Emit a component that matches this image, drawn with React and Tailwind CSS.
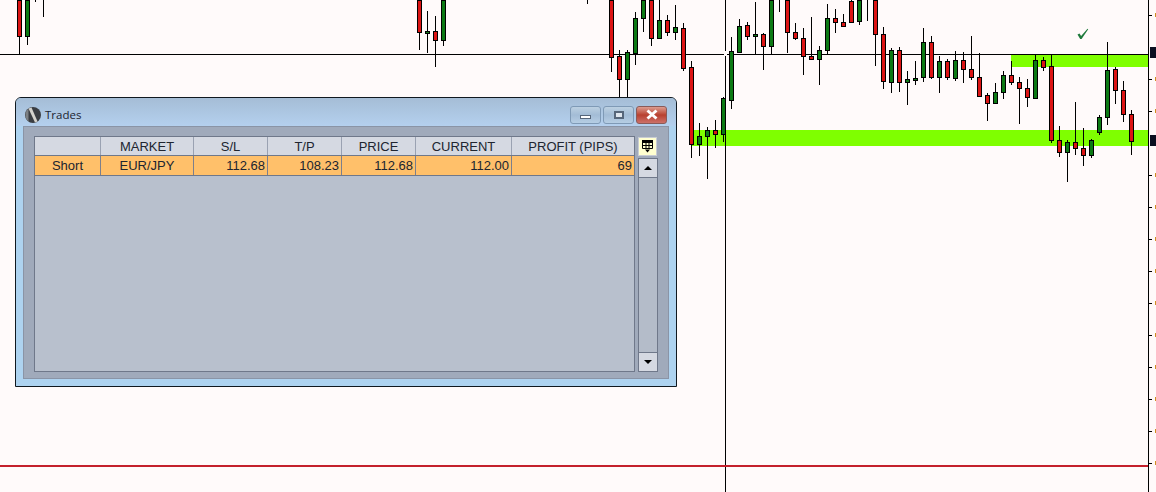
import React from 'react';

// x, wick top, wick bottom, body top, body bottom, colour (r / g)
const candles = [
  [19, 0, 54, 0, 36, 'r'], [27, 0, 45, 0, 36, 'g'], [35, 0, 2], [43, 0, 17],
  [419, 0, 50, 0, 32, 'r'], [427, 11, 53, 31, 33, 'g'], [435, 16, 67, 31, 40, 'r'], [443, 0, 46, 0, 40, 'g'],
  [587, 0, 4],
  [611, 0, 72, 0, 57, 'r'], [619, 50, 97, 56, 79, 'r'], [627, 50, 97, 52, 79, 'g'], [635, 12, 65, 18, 53, 'g'],
  [643, 0, 32, 0, 18, 'g'], [651, 0, 46, 0, 38, 'r'], [659, 0, 38, 20, 38, 'g'], [667, 15, 36, 20, 32, 'r'],
  [675, 5, 40, 27, 32, 'g'], [683, 23, 71, 28, 68, 'r'], [691, 61, 158, 67, 144, 'r'], [699, 123, 156, 136, 144, 'g'],
  [707, 127, 179, 130, 136, 'g'], [715, 120, 148, 130, 134, 'r'], [723, 97, 142, 98, 134, 'g'], [731, 37, 109, 51, 100, 'g'],
  [739, 19, 53, 26, 52, 'g'], [747, 22, 40, 25, 36, 'r'], [755, 2, 54, 34, 36, 'g'], [763, 33, 70, 34, 46, 'r'],
  [771, 0, 54, 0, 46, 'g'], [779, 0, 12], [787, 0, 53, 0, 32, 'r'], [795, 23, 40, 32, 38, 'r'],
  [803, 28, 75, 38, 56, 'r'], [811, 17, 60, 56, 59, 'r'], [819, 46, 85, 50, 59, 'g'], [827, 4, 54, 18, 50, 'g'],
  [835, 9, 33, 18, 22, 'r'], [843, 14, 26, 22, 26, 'r'], [851, 0, 23, 1, 22, 'r'], [859, 0, 25, 0, 21, 'g'],
  [867, 0, 21], [875, 0, 66, 0, 34, 'r'], [883, 27, 89, 34, 81, 'r'], [891, 48, 93, 50, 82, 'g'],
  [899, 47, 92, 50, 82, 'r'], [907, 71, 105, 79, 82, 'g'], [915, 61, 85, 78, 80, 'g'], [923, 28, 82, 42, 77, 'g'],
  [931, 36, 79, 42, 77, 'r'], [939, 56, 93, 61, 77, 'g'], [947, 59, 80, 61, 77, 'r'], [955, 51, 81, 60, 78, 'g'],
  [963, 52, 83, 60, 69, 'r'], [971, 36, 80, 69, 77, 'r'], [979, 53, 96, 77, 96, 'r'], [987, 93, 121, 95, 103, 'r'],
  [995, 83, 104, 92, 103, 'g'], [1003, 71, 99, 75, 92, 'g'], [1011, 61, 85, 75, 82, 'r'], [1019, 77, 124, 82, 88, 'r'],
  [1027, 79, 107, 88, 97, 'r'], [1035, 54, 98, 60, 98, 'g'], [1043, 57, 71, 60, 67, 'r'], [1051, 54, 143, 66, 140, 'r'],
  [1059, 126, 157, 140, 152, 'r'], [1067, 140, 182, 142, 152, 'g'], [1075, 102, 155, 142, 148, 'r'], [1083, 128, 166, 148, 155, 'r'],
  [1091, 139, 158, 140, 155, 'g'], [1099, 115, 135, 117, 132, 'g'], [1107, 42, 125, 70, 117, 'g'], [1115, 67, 104, 69, 90, 'r'],
  [1123, 81, 122, 90, 114, 'r'], [1131, 110, 155, 114, 141, 'r'],
];

const ticks = [15, 79, 111, 175, 207, 239, 271, 303, 335, 367, 399, 431, 463];

function Chart() {
  return (
    <svg className="absolute inset-0" width="1156" height="492">
      <rect x="1011" y="55" width="137" height="12" fill="#7fff00" />
      <rect x="691" y="130" width="457" height="16" fill="#7fff00" />
      <path d="M0 54.5H1148M725.5 0V492" stroke="#000" />
      <rect x="724" y="51" width="3" height="5" fill="#fffafa" />
      <rect x="0" y="465" width="1148" height="2" fill="#c4202c" />
      <path d="M1148.5 0V492" stroke="#000" />
      {ticks.map((y) => (
        <g key={y}>
          <path d={`M1149 ${y + 0.5}H1152`} stroke="#000" />
          <rect x="1155" y={y - 2} width="1" height="4" fill="#d09020" />
        </g>
      ))}
      <rect x="1150" y="47" width="6" height="11" fill="#0a0f20" />
      <rect x="1150" y="135" width="6" height="11" fill="#0a0f20" />
      {candles.map(([x, wt, wb, bt, bb, c]) => (
        <g key={x}>
          <path d={`M${x + 0.5} ${wt}V${wb}`} stroke="#000" />
          {c && (
            <rect
              x={x - 1.5}
              y={bt + 0.5}
              width="4"
              height={bb - bt}
              fill={c === 'r' ? '#dc1414' : '#0c7a14'}
              stroke="#000"
            />
          )}
        </g>
      ))}
      <path d="M1077.5 34.5l2-1 1.6 2.6 6.4-7.4.7.5-6.6 9.8h-1.4z" fill="#1f7a3c" />
    </svg>
  );
}

function TitleButton({ className, children }) {
  return (
    <div className={`w-[31px] h-[18px] rounded-[3px] border flex items-center justify-center ${className}`}>
      {children}
    </div>
  );
}

const cols = [
  { w: 'w-[66px]', label: '', value: 'Short', align: 'text-center' },
  { w: 'w-[93px]', label: 'MARKET', value: 'EUR/JPY', align: 'text-center' },
  { w: 'w-[74px]', label: 'S/L', value: '112.68', align: 'text-right pr-[2px]' },
  { w: 'w-[74px]', label: 'T/P', value: '108.23', align: 'text-right pr-[2px]' },
  { w: 'w-[74px]', label: 'PRICE', value: '112.68', align: 'text-right pr-[2px]' },
  { w: 'w-[96px]', label: 'CURRENT', value: '112.00', align: 'text-right pr-[2px]' },
  { w: 'w-[122px]', label: 'PROFIT (PIPS)', value: '69', align: 'text-right pr-[2px]' },
];

function TradesWindow() {
  return (
    <div className="absolute left-[15px] top-[97px] w-[662px] h-[290px] rounded-t-[6px] border border-[#10181f] bg-[#aed3f0] flex flex-col font-['Liberation_Sans',sans-serif] text-[13px] leading-none text-[#202530]">
      <div className="h-[28px] shrink-0 rounded-t-[5px] bg-gradient-to-b from-[#a5bdd6] to-[#b4d0ee] flex items-center px-[9px] pt-[5px]">
        <svg width="16" height="16" viewBox="0 0 16 16">
          <circle cx="8" cy="8" r="8" fill="#3a3d42" />
          <path d="M0.5 6a8 8 0 0 1 3-4.500V14.500a8 8 0 0 1-3-4.500z" fill="#7c8084" />
          <path d="M3.500 1.500l3-1 6 14-2.500 1z" fill="#d4d2cc" />
        </svg>
        <span className="ml-[4px] font-['Open_Sans',sans-serif] text-[11.5px] text-[#1c2430]">Trades</span>
        <div className="ml-auto flex gap-[2px]">
          <TitleButton className="border-[#7f9ab6] bg-gradient-to-b from-[#bcd0e2] via-[#a3bcd6] to-[#b6cee4]">
            <div className="mt-[5px] w-[11px] h-[4px] bg-white border border-[#56667a]" />
          </TitleButton>
          <TitleButton className="border-[#7f9ab6] bg-gradient-to-b from-[#bcd0e2] via-[#a3bcd6] to-[#b6cee4]">
            <div className="w-[10px] h-[8px] bg-[#dfe6ee] border-2 border-[#56667a]" />
          </TitleButton>
          <TitleButton className="border-[#8a5a58] bg-gradient-to-b from-[#dc9c90] via-[#b8402f] to-[#cc7068]">
            <svg width="14" height="11" viewBox="0 0 14 11">
              <path d="M2.500 1.500l9 8M11.500 1.500l-9 8" stroke="#fff" strokeWidth="3" />
            </svg>
          </TitleButton>
        </div>
      </div>

      <div className="mx-[7px] h-[253px] bg-[#a0aabb] border border-[#8a94a6] flex pl-[10px] pt-[9px] gap-[3px]">
        <div className="w-[601px] h-[236px] bg-[#b8c0cd] border border-[#6f788a]">
          <div className="flex h-[19px] bg-[#d5d9e2] border-b border-[#6f788a]">
            {cols.map((c) => (
              <div key={c.label} className={`${c.w} shrink-0 border-r border-[#9aa2b2] flex items-center justify-center last:border-r-0`}>
                {c.label}
              </div>
            ))}
          </div>
          <div className="flex h-[20px] bg-[#ffc06a] border-b border-[#6f788a]">
            {cols.map((c) => (
              <div key={c.label} className={`${c.w} shrink-0 border-r border-[#7c7f8c] leading-[19px] ${c.align} last:border-r-0`}>
                {c.value}
              </div>
            ))}
          </div>
        </div>

        <div className="w-[20px] h-[236px] pt-[1px] flex flex-col gap-[2px]">
          <div className="w-[19px] h-[19px] bg-[#ffffd0] border border-[#c8ccd4] flex items-center justify-center">
            <svg width="13" height="13" viewBox="0 0 13 13">
              <path d="M1 0h11v3H1z" fill="#000" />
              <path d="M1.500 3v5.500h10V3M5 3v5.500M8 3v5.500M1.500 5.500h10" fill="none" stroke="#000" />
              <path d="M4 9.500h5L6.500 12.500z" fill="#000" />
            </svg>
          </div>
          <div className="flex-1 bg-[#b4bcc9] border border-[#6f788a] flex flex-col justify-between">
            <div className="h-[19px] bg-[#d5d9e2] border-b border-[#6f788a] flex items-center justify-center">
              <div className="w-0 h-0 border-x-[4px] border-x-transparent border-b-[4px] border-b-black" />
            </div>
            <div className="h-[19px] bg-[#d5d9e2] border-t border-[#6f788a] flex items-center justify-center">
              <div className="w-0 h-0 border-x-[4px] border-x-transparent border-t-[4px] border-t-black" />
            </div>
          </div>
        </div>
      </div>
    </div>
  );
}

export default function App() {
  return (
    <div className="relative w-[1156px] h-[492px] overflow-hidden bg-[#fffafa]">
      <Chart />
      <TradesWindow />
    </div>
  );
}
